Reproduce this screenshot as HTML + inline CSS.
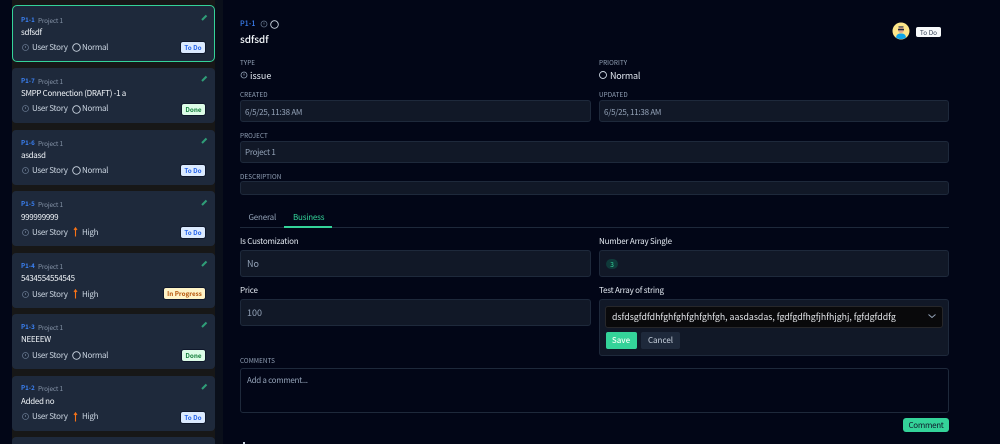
<!DOCTYPE html>
<html><head><meta charset="utf-8">
<style>
html{margin:0;padding:0;background:#020617;width:1000px;height:444px;overflow:hidden;}
body{margin:0;padding:0;background:#020617;width:1000px;height:444px;position:relative;overflow:hidden;font-family:"Noto Sans CJK JP","Liberation Sans",sans-serif;color:#e2e8f0;}
#w{position:absolute;left:0;top:0;width:1000px;height:444px;overflow:hidden;}
.a{position:absolute;white-space:nowrap;line-height:1;}
.list{position:absolute;left:12px;top:0;width:203px;height:444px;background:#171717;}
.gut{position:absolute;left:215px;top:0;width:8px;height:444px;background:#0a0f1a;}
.card{position:absolute;left:12px;width:203px;height:55px;background:#1e293b;border-radius:4px;}
.card.sel{box-sizing:border-box;top:5px;height:57px;border:1.5px solid #34d399;border-radius:5px;}
.id{position:absolute;left:21px;font-size:6.2px;font-weight:700;color:#3b82f6;line-height:1;}
.pr{position:absolute;left:38px;font-size:6.5px;letter-spacing:-.2px;color:#8492a6;line-height:1;}
.t{position:absolute;left:21px;font-size:8px;letter-spacing:-.3px;color:#f1f5f9;line-height:1;white-space:nowrap;}
.m{position:absolute;margin-top:.5px;font-size:8px;letter-spacing:-.3px;color:#cbd5e1;line-height:1;white-space:nowrap;}
.badge{position:absolute;height:11px;line-height:11px;font-size:6.3px;font-weight:700;text-align:center;border-radius:2px;box-shadow:0 0 0 1px #0f172a;}
.todo{background:#dbeafe;color:#2563eb;left:181px;width:24px;}
.done{background:#dcfce7;color:#15803d;left:182px;width:23px;}
.prog{background:#fef3c7;color:#b45309;left:164px;width:41px;}
.lab{position:absolute;left:240px;margin-top:1px;font-size:6.3px;color:#94a3b8;line-height:1;white-space:nowrap;letter-spacing:.1px;}
.box{position:absolute;background:#111827;border:1px solid #1e293b;border-radius:3px;box-sizing:border-box;}
.v{position:absolute;margin-top:1px;font-size:8px;letter-spacing:-.25px;color:#94a3b8;line-height:1;white-space:nowrap;}
.fl{position:absolute;margin-top:1px;font-size:8px;letter-spacing:-.2px;color:#e2e8f0;line-height:1;white-space:nowrap;}
svg{position:absolute;overflow:visible;}
</style></head><body><div id="w">
<div class="list"></div><div class="gut"></div>

<div class="card sel"></div>
<div class="card" style="top:68px"></div>
<div class="card" style="top:129.5px"></div>
<div class="card" style="top:191px"></div>
<div class="card" style="top:253px"></div>
<div class="card" style="top:314px"></div>
<div class="card" style="top:376px"></div>
<div class="card" style="top:437px;height:7px;border-radius:4px 4px 0 0"></div>

<!-- card 1 -->
<div class="id" style="top:16.500px">P1-1</div><div class="pr" style="top:16.500px">Project 1</div>
<div class="t" style="top:29px">sdfsdf</div>
<svg style="left:22px;top:44px" width="7" height="7"><circle cx="3.5" cy="3.5" r="3" fill="none" stroke="#64748b" stroke-width=".8"/><path d="M3.5 2v2" stroke="#64748b" stroke-width=".8"/></svg>
<div class="m" style="left:32px;top:43px">User Story</div>
<svg style="left:72px;top:43px" width="9" height="9"><circle cx="4.5" cy="4.5" r="3.8" fill="none" stroke="#cbd5e1" stroke-width=".9"/></svg>
<div class="m" style="left:82px;top:43px">Normal</div>
<div class="badge todo" style="top:42px">To Do</div>
<svg style="left:201px;top:14px" width="7" height="7"><path d="M1 6L5.5 1.500" stroke="#2f9e78" stroke-width="2"/></svg>

<!-- card 2 -->
<div class="id" style="top:77.5px">P1-7</div><div class="pr" style="top:77.5px">Project 1</div>
<div class="t" style="top:90px">SMPP Connection (DRAFT) -1 a</div>
<svg style="left:22px;top:105px" width="7" height="7"><circle cx="3.5" cy="3.5" r="3" fill="none" stroke="#64748b" stroke-width=".8"/><path d="M3.5 2v2" stroke="#64748b" stroke-width=".8"/></svg>
<div class="m" style="left:32px;top:104px">User Story</div>
<svg style="left:72px;top:105px" width="9" height="9"><circle cx="4.5" cy="4.5" r="3.8" fill="none" stroke="#cbd5e1" stroke-width=".9"/></svg>
<div class="m" style="left:82px;top:104px">Normal</div>
<div class="badge done" style="top:104px">Done</div>
<svg style="left:201px;top:75px" width="7" height="7"><path d="M1 6L5.5 1.500" stroke="#2f9e78" stroke-width="2"/></svg>

<!-- card 3 -->
<div class="id" style="top:139.500px">P1-6</div><div class="pr" style="top:139.500px">Project 1</div>
<div class="t" style="top:152px">asdasd</div>
<svg style="left:22px;top:167px" width="7" height="7"><circle cx="3.5" cy="3.5" r="3" fill="none" stroke="#64748b" stroke-width=".8"/><path d="M3.5 2v2" stroke="#64748b" stroke-width=".8"/></svg>
<div class="m" style="left:32px;top:166px">User Story</div>
<svg style="left:72px;top:166px" width="9" height="9"><circle cx="4.5" cy="4.5" r="3.8" fill="none" stroke="#cbd5e1" stroke-width=".9"/></svg>
<div class="m" style="left:82px;top:166px">Normal</div>
<div class="badge todo" style="top:165px">To Do</div>
<svg style="left:201px;top:137px" width="7" height="7"><path d="M1 6L5.5 1.500" stroke="#2f9e78" stroke-width="2"/></svg>

<!-- card 4 -->
<div class="id" style="top:201px">P1-5</div><div class="pr" style="top:201px">Project 1</div>
<div class="t" style="top:214px">999999999</div>
<svg style="left:22px;top:229px" width="7" height="7"><circle cx="3.5" cy="3.5" r="3" fill="none" stroke="#64748b" stroke-width=".8"/><path d="M3.5 2v2" stroke="#64748b" stroke-width=".8"/></svg>
<div class="m" style="left:32px;top:228px">User Story</div>
<svg style="left:72px;top:227px" width="7" height="10"><path d="M3.5 9.500V1M2 3L3.500 .8 5 3" stroke="#f97316" stroke-width="1.100" fill="none"/></svg>
<div class="m" style="left:82px;top:228px">High</div>
<div class="badge todo" style="top:227px">To Do</div>
<svg style="left:201px;top:199px" width="7" height="7"><path d="M1 6L5.5 1.500" stroke="#2f9e78" stroke-width="2"/></svg>

<!-- card 5 -->
<div class="id" style="top:263px">P1-4</div><div class="pr" style="top:263px">Project 1</div>
<div class="t" style="top:275px">5434554554545</div>
<svg style="left:22px;top:291px" width="7" height="7"><circle cx="3.5" cy="3.5" r="3" fill="none" stroke="#64748b" stroke-width=".8"/><path d="M3.5 2v2" stroke="#64748b" stroke-width=".8"/></svg>
<div class="m" style="left:32px;top:290px">User Story</div>
<svg style="left:72px;top:289px" width="7" height="10"><path d="M3.5 9.500V1M2 3L3.500 .8 5 3" stroke="#f97316" stroke-width="1.100" fill="none"/></svg>
<div class="m" style="left:82px;top:290px">High</div>
<div class="badge prog" style="top:288px">In Progress</div>
<svg style="left:201px;top:260px" width="7" height="7"><path d="M1 6L5.5 1.500" stroke="#2f9e78" stroke-width="2"/></svg>

<!-- card 6 -->
<div class="id" style="top:324px">P1-3</div><div class="pr" style="top:324px">Project 1</div>
<div class="t" style="top:336px">NEEEEW</div>
<svg style="left:22px;top:352px" width="7" height="7"><circle cx="3.5" cy="3.5" r="3" fill="none" stroke="#64748b" stroke-width=".8"/><path d="M3.5 2v2" stroke="#64748b" stroke-width=".8"/></svg>
<div class="m" style="left:32px;top:351px">User Story</div>
<svg style="left:72px;top:351px" width="9" height="9"><circle cx="4.5" cy="4.5" r="3.8" fill="none" stroke="#cbd5e1" stroke-width=".9"/></svg>
<div class="m" style="left:82px;top:351px">Normal</div>
<div class="badge done" style="top:350px">Done</div>
<svg style="left:201px;top:321px" width="7" height="7"><path d="M1 6L5.5 1.500" stroke="#2f9e78" stroke-width="2"/></svg>

<!-- card 7 -->
<div class="id" style="top:385px">P1-2</div><div class="pr" style="top:385px">Project 1</div>
<div class="t" style="top:398px">Added no</div>
<svg style="left:22px;top:413px" width="7" height="7"><circle cx="3.5" cy="3.5" r="3" fill="none" stroke="#64748b" stroke-width=".8"/><path d="M3.5 2v2" stroke="#64748b" stroke-width=".8"/></svg>
<div class="m" style="left:32px;top:412px">User Story</div>
<svg style="left:72px;top:412px" width="7" height="10"><path d="M3.5 9.500V1M2 3L3.500 .8 5 3" stroke="#f97316" stroke-width="1.100" fill="none"/></svg>
<div class="m" style="left:82px;top:412px">High</div>
<div class="badge todo" style="top:412px">To Do</div>
<svg style="left:201px;top:383px" width="7" height="7"><path d="M1 6L5.5 1.500" stroke="#2f9e78" stroke-width="2"/></svg>

<!-- main header -->
<div class="a" style="left:240px;top:20.5px;font-size:7.2px;font-weight:500;color:#3b82f6">P1-1</div>
<svg style="left:260px;top:20px" width="8" height="8"><circle cx="4" cy="4" r="3" fill="none" stroke="#64748b" stroke-width=".8"/><path d="M4 2.500v2" stroke="#64748b" stroke-width=".8"/></svg>
<svg style="left:270px;top:19.500px" width="9" height="9"><circle cx="4.500" cy="4.500" r="3.800" fill="none" stroke="#cbd5e1" stroke-width=".9"/></svg>
<div class="a" style="left:240px;top:34px;font-size:10px;font-weight:500;letter-spacing:-.1px;color:#f1f5f9">sdfsdf</div>

<svg style="left:892px;top:22px" width="18" height="18"><circle cx="9" cy="9" r="8.500" fill="#fde68a"/><path d="M4 15.500C4.500 12 6.500 11.500 9 11.500s4.500 .5 5 4A8.500 8.500 0 0 1 4 15.500z" fill="#0ea5e9"/><circle cx="9" cy="8" r="3" fill="#e0a98a"/><rect x="6" y="6.800" width="6" height="1.500" fill="#1e293b"/><rect x="6.500" y="4.300" width="5" height="1.200" fill="#334155"/></svg>
<div class="a" style="left:916px;top:27px;width:25px;height:10px;line-height:10px;background:#f8fafc;color:#334155;font-size:6.500px;text-align:center;border-radius:2px;">To Do</div>

<div class="lab" style="top:58.500px">TYPE</div>
<svg style="left:240px;top:71px" width="8" height="8"><circle cx="4" cy="4" r="3" fill="none" stroke="#94a3b8" stroke-width=".8"/><path d="M4 2.500v2" stroke="#94a3b8" stroke-width=".8"/></svg>
<div class="a" style="left:250px;top:70.500px;font-size:9px;color:#e2e8f0">issue</div>

<div class="lab" style="left:599px;top:58.500px">PRIORITY</div>
<svg style="left:599px;top:71px" width="9" height="9"><circle cx="4" cy="4" r="3.500" fill="none" stroke="#cbd5e1" stroke-width=".9"/></svg>
<div class="a" style="left:610px;top:70.500px;font-size:9px;letter-spacing:-.2px;color:#e2e8f0">Normal</div>

<div class="lab" style="top:91px">CREATED</div>
<div class="box" style="left:240px;top:100px;width:351px;height:22px"></div>
<div class="v" style="left:245px;top:107.500px">6/5/25, 11:38 AM</div>

<div class="lab" style="left:599px;top:91px">UPDATED</div>
<div class="box" style="left:599px;top:100px;width:350px;height:22px"></div>
<div class="v" style="left:604px;top:107.500px">6/5/25, 11:38 AM</div>

<div class="lab" style="top:132px">PROJECT</div>
<div class="box" style="left:240px;top:141px;width:709px;height:22px"></div>
<div class="v" style="left:245px;top:148px">Project 1</div>

<div class="lab" style="top:173px">DESCRIPTION</div>
<div class="box" style="left:240px;top:181px;width:709px;height:14px"></div>

<!-- tabs -->
<div class="a" style="left:248.500px;top:214px;font-size:8px;letter-spacing:-.2px;color:#94a3b8">General</div>
<div class="a" style="left:293px;top:214px;font-size:8px;letter-spacing:-.2px;color:#34d399">Business</div>
<div class="a" style="left:240px;top:226.500px;width:709px;height:1px;background:#1e293b"></div>
<div class="a" style="left:284px;top:226px;width:48px;height:2px;background:#34d399"></div>

<div class="fl" style="left:240px;top:237px">Is Customization</div>
<div class="box" style="left:240px;top:250px;width:351px;height:27px"></div>
<div class="v" style="left:247px;top:258px;font-size:9px;letter-spacing:0">No</div>

<div class="fl" style="left:599px;top:237px">Number Array Single</div>
<div class="box" style="left:599px;top:250px;width:350px;height:27px"></div>
<div class="a" style="left:606px;top:259px;width:12px;height:10px;line-height:10px;border-radius:5px;background:#0f3a3a;color:#34d399;font-size:6.500px;text-align:center">3</div>

<div class="fl" style="left:240px;top:286px">Price</div>
<div class="box" style="left:240px;top:299px;width:351px;height:27px"></div>
<div class="v" style="left:247px;top:307px;font-size:9px;letter-spacing:0">100</div>

<div class="fl" style="left:599px;top:286px">Test Array of string</div>
<div class="box" style="left:599px;top:299px;width:350px;height:57px"></div>
<div class="box" style="left:605px;top:306px;width:338px;height:22px;background:#09090b;border-color:#27272a"></div>
<div class="a" style="left:612px;top:313px;font-size:8.750px;color:#e5e7eb">dsfdsgfdfdhfghfghfghfghfgh, aasdasdas, fgdfgdfhgfjhfhjghj, fgfdgfddfg</div>
<svg style="left:927px;top:313px" width="10" height="7"><path d="M1.500 1.500L5 4.500 8.500 1.500" stroke="#94a3b8" stroke-width="1" fill="none"/></svg>
<div class="a" style="left:605.500px;top:332px;width:31px;height:17px;line-height:18px;background:#34d399;color:#f0fdf4;font-size:8px;font-weight:500;text-align:center;border-radius:2px">Save</div>
<div class="a" style="left:641px;top:332px;width:39px;height:17px;line-height:18px;background:#1e293b;color:#cbd5e1;font-size:8px;text-align:center;border-radius:2px">Cancel</div>

<div class="lab" style="top:357px">COMMENTS</div>
<div class="box" style="left:240px;top:368px;width:709px;height:45px;background:#020617;"></div>
<div class="v" style="left:247px;top:376px;letter-spacing:-.3px">Add a comment...</div>
<div class="a" style="left:903px;top:418px;width:46px;height:14px;line-height:15px;background:#34d399;color:#0f172a;font-size:8px;letter-spacing:-.3px;text-align:center;border-radius:3px">Comment</div>
<div class="a" style="left:242.500px;top:442px;width:2px;height:2px;background:#cbd5e1"></div>
</div></body></html>
